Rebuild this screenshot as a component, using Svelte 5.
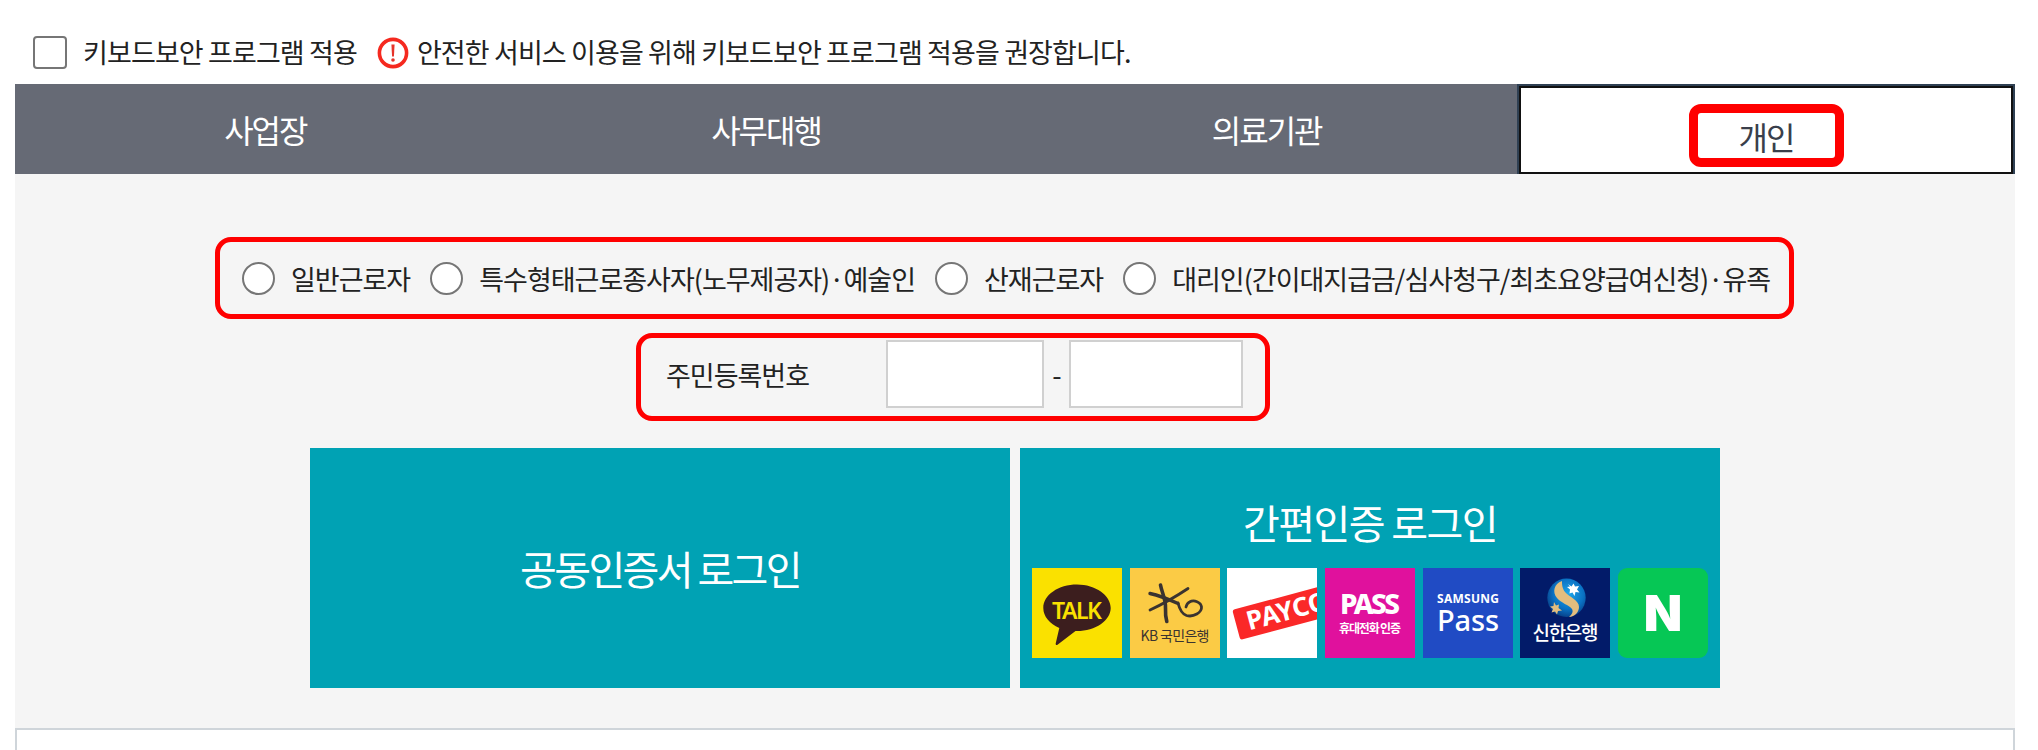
<script>
  const tabs = ["사업장", "사무대행", "의료기관", "개인"];
  const activeTab = "개인";
  const workerTypes = [
    "일반근로자",
    "특수형태근로종사자(노무제공자) · 예술인",
    "산재근로자",
    "대리인(간이대지급금/심사청구/최초요양급여신청) · 유족",
  ];
</script>

<div class="page">
  <div class="notice">
    <label class="keyboard">
      <input type="checkbox" />
      <span>키보드보안 프로그램 적용</span>
    </label>
    <svg class="warn" viewBox="0 0 32 32" width="32" height="32" aria-hidden="true">
      <circle cx="16" cy="16" r="13.6" fill="#fff" stroke="#f5291f" stroke-width="3.6" />
      <path d="M14.4 7.500h3.200l-.7 12h-1.800z" fill="#e6332a" />
      <circle cx="16" cy="23" r="1.800" fill="#e6332a" />
    </svg>
    <span class="notice-text">안전한 서비스 이용을 위해 키보드보안 프로그램 적용을 권장합니다.</span>
  </div>

  <div class="tabs">
    {#each tabs as tab}
      <button class="tab" class:active={tab === activeTab}>
        {#if tab === activeTab}
          <span class="marked">{tab}</span>
        {:else}
          {tab}
        {/if}
      </button>
    {/each}
  </div>

  <div class="panel">
    <div class="types">
      {#each workerTypes as type}
        <label class="type">
          <input type="radio" name="workerType" />
          <span>{type}</span>
        </label>
      {/each}
    </div>

    <div class="resident">
      <span class="resident-label">주민등록번호</span>
      <input class="front" type="text" />
      <span class="dash">-</span>
      <input class="back" type="text" />
    </div>

    <div class="logins">
      <button class="login cert">공동인증서 로그인</button>
      <div class="login simple">
        <div class="simple-title">간편인증 로그인</div>
        <div class="providers">
          <svg class="tile" viewBox="0 0 90 90" aria-label="카카오톡">
            <rect width="90" height="90" fill="#fae100" />
            <path d="M45 16.500c-18.600 0-33.700 10.500-33.700 23.500 0 8.500 6.400 15.800 16 20l-3.600 15.500c-.3 1.300.8 1.900 1.800 1.200l18-13.700c.5 0 1 0 1.500 0 18.600 0 33.700-10.500 33.700-23S63.600 16.500 45 16.500z" fill="#3c1e1e" />
            <text x="45" y="51" class="talk" textLength="50">TALK</text>
          </svg>

          <svg class="tile" viewBox="0 0 90 90" aria-label="KB국민은행">
            <rect width="90" height="90" fill="#fbcb45" />
            <g fill="none" stroke="#3a3330" stroke-linecap="round" stroke-linejoin="round">
              <path d="M20 25.500c9 2 18 5.500 28 10" stroke-width="3.400" />
              <path d="M58 20.500c-12 8-24 15-38 21.500" stroke-width="2.800" />
              <path d="M30.500 17c1.500 8 5.500 15 5 23-.2 5 .3 10 1.300 13.500" stroke-width="3.600" />
              <path d="M48 35c1.500 6 4 11 8.500 12.500 7 2 15.500-3 15-8.500-.5-5-7.500-7.500-12-5-2 1-3 3-3.500 5" stroke-width="2.800" />
            </g>
            <text x="45" y="73" class="kb" textLength="69">KB 국민은행</text>
          </svg>

          <svg class="tile" viewBox="0 0 90 90" aria-label="페이코">
            <rect width="90" height="90" fill="#fff" />
            <g transform="rotate(-15 5.300 42)">
              <rect x="5.300" y="42" width="110" height="31" rx="2.500" fill="#fa2828" />
              <text x="16.500" y="66" class="payco">PAYCO</text>
            </g>
          </svg>

          <svg class="tile" viewBox="0 0 90 90" aria-label="PASS">
            <rect width="90" height="90" fill="#e0119d" />
            <text x="45" y="46.300" class="pass" textLength="60">PASS</text>
            <text x="45" y="65" class="pass-sub" textLength="62">휴대전화 인증</text>
          </svg>

          <svg class="tile" viewBox="0 0 90 90" aria-label="삼성패스">
            <rect width="90" height="90" fill="#204bc4" />
            <text x="45" y="35.300" class="samsung" textLength="62">SAMSUNG</text>
            <text x="45" y="62.500" class="sam-pass" textLength="62">Pass</text>
          </svg>

          <svg class="tile" viewBox="0 0 90 90" aria-label="신한은행">
            <defs>
              <radialGradient id="shinhanBall" cx="0.55" cy="0.4" r="0.65">
                <stop offset="0" stop-color="#1ea6ea" />
                <stop offset="0.6" stop-color="#0a72c4" />
                <stop offset="1" stop-color="#07397f" />
              </radialGradient>
            </defs>
            <rect width="90" height="90" fill="#021b69" />
            <circle cx="46.500" cy="29.800" r="19.200" fill="url(#shinhanBall)" />
            <path d="M42 13c-8 3-10 11-5 17 4 5 12 7 15 11 1.500 2.500 0 5.500-3 8 6-.5 10-5 10-10 0-7-10-10-14-15-3-4-3-8-3-11z" fill="#e3bd7e" />
            <path d="M48 16l3.500 2.500 2-3 1.500 3 4-.5-2 3.500 2.500 3-4-.5-1 4-2-3.500-3 1 .5-4-3-2.500 3-.5z" fill="#fff" />
            <path d="M34 34l2 3.500 3-1-.5 3.500 3.500 2.500-4 .5-1 3.500-2-3-3.500 1 1.500-3.500-3-2.500 3.500-.5z" fill="#e3bd7e" />
            <text x="45.500" y="71.500" class="shinhan" textLength="66">신한은행</text>
          </svg>

          <svg class="tile" viewBox="0 0 90 90" aria-label="네이버">
            <rect width="90" height="90" rx="9" fill="#06c755" />
            <text x="45" y="63" class="naver-n">N</text>
          </svg>
        </div>
      </div>
    </div>
  </div>

  <div class="box"></div>
</div>

<style>
  :global(body) {
    margin: 0;
    background: #fff;
    overflow: hidden;
  }

  .page {
    width: 2000px;
    height: 750px;
    margin-left: 15px;
    font-family: "Noto Sans CJK KR", "Noto Sans", sans-serif;
    color: #222;
  }

  .notice {
    height: 84px;
    box-sizing: border-box;
    padding: 34px 0 0 18px;
    display: flex;
    align-items: flex-start;
    font-size: 27px;
    letter-spacing: -0.88px;
    line-height: 36px;
  }

  .keyboard {
    display: flex;
    align-items: flex-start;
    gap: 16px;
  }

  .keyboard input {
    appearance: none;
    width: 34px;
    height: 33px;
    margin: 2px 0 0;
    background: #fff;
    border: 2px solid #767676;
    border-radius: 4px;
  }

  .warn {
    margin: 3px 8px 0 20px;
  }

  .tabs {
    display: flex;
    height: 90px;
    background: #666a75;
  }

  .tab {
    flex: 1;
    padding: 0;
    border: 0;
    background: none;
    color: #fff;
    font: inherit;
    font-size: 32px;
    letter-spacing: -2px;
  }

  .tab.active {
    flex: 0 0 498px;
    box-sizing: border-box;
    background: #fff;
    color: #3a3f4b;
    border: 2px solid #2f4053;
    border-bottom: 0;
    box-shadow: inset 0 0 0 2px #111;
    display: flex;
    align-items: center;
    justify-content: center;
  }

  .marked {
    width: 155px;
    height: 63px;
    margin-top: 11px;
    box-sizing: border-box;
    border: 9px solid #f00;
    border-radius: 12px;
    display: flex;
    align-items: center;
    justify-content: center;
  }

  .panel {
    height: 554px;
    box-sizing: border-box;
    background: #f5f5f5;
    padding-top: 63px;
  }

  .types {
    margin-left: 200px;
    width: 1579px;
    height: 82px;
    box-sizing: border-box;
    border: 5px solid #f00;
    border-radius: 16px;
    padding-left: 22px;
    display: flex;
    align-items: center;
    gap: 20px;
    font-size: 27px;
    letter-spacing: -1px;
    word-spacing: -5px;
  }

  .type {
    display: flex;
    align-items: center;
    gap: 16px;
    white-space: nowrap;
  }

  .type input {
    appearance: none;
    width: 33px;
    height: 33px;
    margin: 0;
    background: #fff;
    border: 2px solid #767676;
    border-radius: 50%;
  }

  .resident {
    margin: 14px 0 0 621px;
    width: 634px;
    height: 88px;
    box-sizing: border-box;
    border: 5px solid #f00;
    border-radius: 16px;
    padding: 0 0 6px 25px;
    display: flex;
    align-items: center;
    font-size: 27px;
    letter-spacing: -1px;
  }

  .resident-label {
    width: 220px;
  }

  .resident input {
    height: 68px;
    box-sizing: border-box;
    padding: 0;
    background: #fff;
    border: 2px solid #d0d0d0;
  }

  .front {
    width: 158px;
  }

  .back {
    width: 174px;
  }

  .dash {
    width: 25px;
    text-align: center;
  }

  .logins {
    margin: 27px 0 0 295px;
    display: flex;
    gap: 10px;
  }

  .login {
    width: 700px;
    height: 240px;
    box-sizing: border-box;
    background: #00a2b4;
    color: #fff;
    border: 0;
    font: inherit;
    font-size: 40px;
    letter-spacing: -1.6px;
  }

  .cert {
    letter-spacing: -2.6px;
  }

  .simple {
    padding: 0 12px;
    display: flex;
    flex-direction: column;
  }

  .simple-title {
    height: 120px;
    box-sizing: border-box;
    padding-top: 46px;
    line-height: 56px;
    text-align: center;
  }

  .providers {
    display: flex;
    justify-content: space-between;
  }

  .tile {
    display: block;
    width: 90px;
    height: 90px;
  }

  .tile text {
    text-anchor: middle;
    letter-spacing: 0;
  }

  .talk {
    font: 600 23px "Noto Sans", sans-serif;
    fill: #fae100;
  }

  .kb {
    font: 400 14px "Noto Sans CJK KR", sans-serif;
    fill: #3a3330;
  }

  .tile .payco {
    font: 700 26px "Noto Sans", sans-serif;
    fill: #fff;
    text-anchor: start;
  }

  .pass {
    font: 800 28px "Noto Sans", sans-serif;
    fill: #fff;
  }

  .pass-sub {
    font: 700 12px "Noto Sans CJK KR", sans-serif;
    fill: #fff;
  }

  .samsung {
    font: 700 12px "Noto Sans", sans-serif;
    fill: #fff;
  }

  .sam-pass {
    font: 500 29px "Noto Sans", sans-serif;
    fill: #fff;
  }

  .shinhan {
    font: 500 19px "Noto Sans CJK KR", sans-serif;
    fill: #fff;
  }

  .naver-n {
    font: 900 50px "Inter", "Noto Sans", sans-serif;
    fill: #fff;
  }

  .box {
    height: 22px;
    box-sizing: border-box;
    background: #fff;
    border: 2px solid #cfd5da;
    border-bottom: 0;
  }
</style>
